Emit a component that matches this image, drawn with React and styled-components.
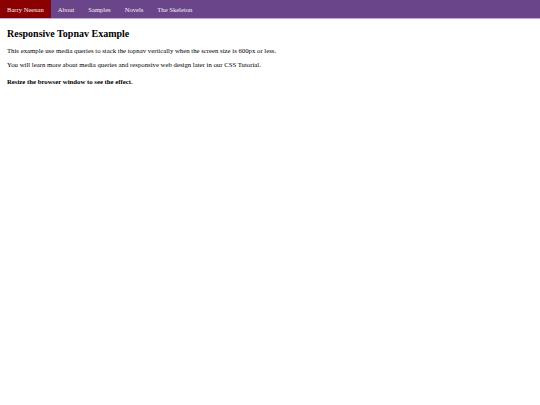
import React from 'react';
import styled, { createGlobalStyle } from 'styled-components';

const GlobalStyle = createGlobalStyle`
	html, body {
		margin: 0;
		padding: 0;
		background: #fff;
		font-family: 'Liberation Serif', 'Times New Roman', serif;
		color: #000;
	}
`;

const Topnav = styled.nav`
	display: flex;
	align-items: stretch;
	background: #6b4589;
	border-bottom: 1px solid #c3a6dc;
	height: 18px;
	overflow: hidden;
`;

const NavLink = styled.a`
	display: flex;
	align-items: center;
	padding: 0 7px;
	font-size: 6.6px;
	color: #f2f2f2;
	text-decoration: none;
	background: ${props => (props.active ? '#8b0000' : 'transparent')};
`;

const Content = styled.main`
	padding: 0 7px;
`;

const Title = styled.h1`
	margin: 9px 0 8px;
	font-size: 10px;
	line-height: 11px;
	font-weight: bold;
`;

const Text = styled.p`
	margin: ${props => (props.strong ? '9px' : '0')} 0 6px;
	font-size: 6.75px;
	line-height: 8px;
	font-weight: ${props => (props.strong ? 'bold' : 'normal')};
`;

const links = ['About', 'Samples', 'Novels', 'The Skeleton'];

export default function App() {
	return (
		<>
			<GlobalStyle />
			<Topnav>
				<NavLink href="#" active>Barry Neenan</NavLink>
				{links.map(label => (
					<NavLink key={label} href="#">{label}</NavLink>
				))}
			</Topnav>
			<Content>
				<Title>Responsive Topnav Example</Title>
				<Text>This example use media queries to stack the topnav vertically when the screen size is 600px or less.</Text>
				<Text>You will learn more about media queries and responsive web design later in our CSS Tutorial.</Text>
				<Text strong>Resize the browser window to see the effect.</Text>
			</Content>
		</>
	);
}
